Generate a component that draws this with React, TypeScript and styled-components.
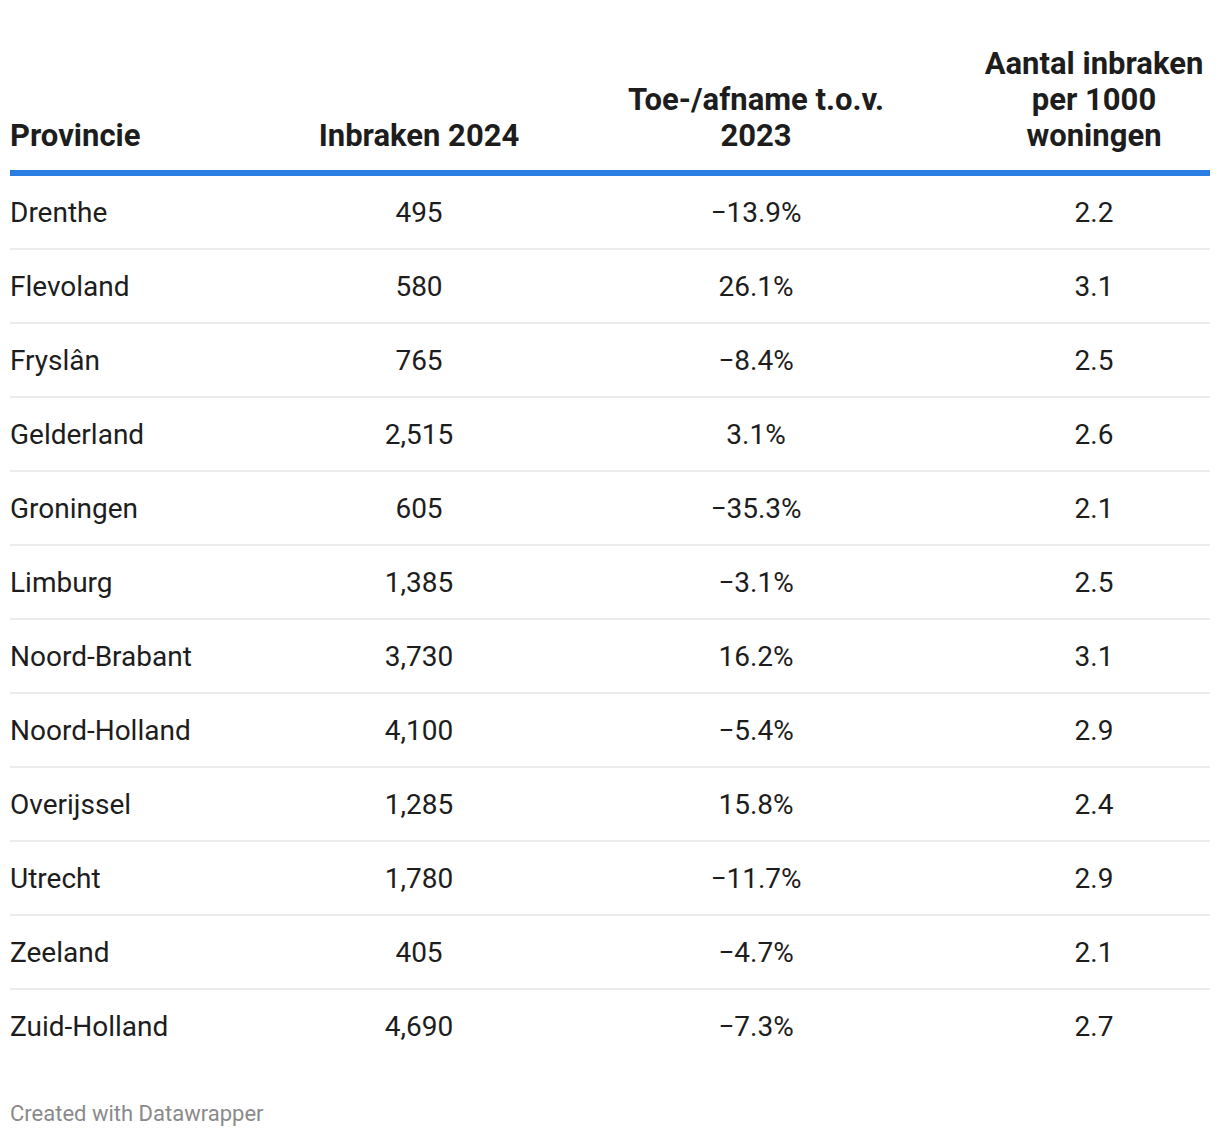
import React from "react";
import styled, { createGlobalStyle } from "styled-components";

const GlobalStyle = createGlobalStyle`
  html, body {
    margin: 0;
    padding: 0;
    background: #ffffff;
  }
  body {
    font-family: Roboto, "Noto Sans", "Liberation Sans", sans-serif;
    color: #1d1d1d;
  }
`;

const Page = styled.div`
  width: 1220px;
  padding: 46px 10px 0 10px;
  box-sizing: border-box;
`;

const Grid = styled.div`
  display: grid;
  grid-template-columns: 294px 230px 444px 232px;
  width: 1200px;
`;

const HeadCell = styled.div<{ $align: "left" | "center"; $padX?: number }>`
  display: flex;
  align-items: flex-end;
  justify-content: ${(p) => (p.$align === "left" ? "flex-start" : "center")};
  text-align: ${(p) => p.$align};
  padding: 0 ${(p) => p.$padX ?? 0}px 16px;
  font-size: 31px;
  line-height: 36px;
  font-weight: 700;
  color: #1d1d1d;
  border-bottom: 6px solid #2a7de1;
`;

const Cell = styled.div<{ $align: "left" | "center"; $last: boolean }>`
  display: flex;
  align-items: center;
  justify-content: ${(p) => (p.$align === "left" ? "flex-start" : "center")};
  height: 72px;
  font-size: 28px;
  color: #1d1d1d;
  border-bottom: ${(p) => (p.$last ? "none" : "2px solid #ececec")};
`;

const Footer = styled.div`
  margin-top: 38px;
  font-size: 22px;
  line-height: 28px;
  color: #8a8a8a;
`;

const rows: [string, string, string, string][] = [
  ["Drenthe", "495", "\u221213.9%", "2.2"],
  ["Flevoland", "580", "26.1%", "3.1"],
  ["Fryslân", "765", "\u22128.4%", "2.5"],
  ["Gelderland", "2,515", "3.1%", "2.6"],
  ["Groningen", "605", "\u221235.3%", "2.1"],
  ["Limburg", "1,385", "\u22123.1%", "2.5"],
  ["Noord-Brabant", "3,730", "16.2%", "3.1"],
  ["Noord-Holland", "4,100", "\u22125.4%", "2.9"],
  ["Overijssel", "1,285", "15.8%", "2.4"],
  ["Utrecht", "1,780", "\u221211.7%", "2.9"],
  ["Zeeland", "405", "\u22124.7%", "2.1"],
  ["Zuid-Holland", "4,690", "\u22127.3%", "2.7"],
];

export default function App() {
  return (
    <>
      <GlobalStyle />
      <Page>
        <Grid>
          <HeadCell $align="left">Provincie</HeadCell>
          <HeadCell $align="center">Inbraken 2024</HeadCell>
          <HeadCell $align="center" $padX={80}>
            Toe-/afname t.o.v. 2023
          </HeadCell>
          <HeadCell $align="center">Aantal inbraken per 1000 woningen</HeadCell>
          {rows.map((r, i) =>
            r.map((v, j) => (
              <Cell
                key={`${i}-${j}`}
                $align={j === 0 ? "left" : "center"}
                $last={i === rows.length - 1}
              >
                {v}
              </Cell>
            ))
          )}
        </Grid>
        <Footer>Created with Datawrapper</Footer>
      </Page>
    </>
  );
}
